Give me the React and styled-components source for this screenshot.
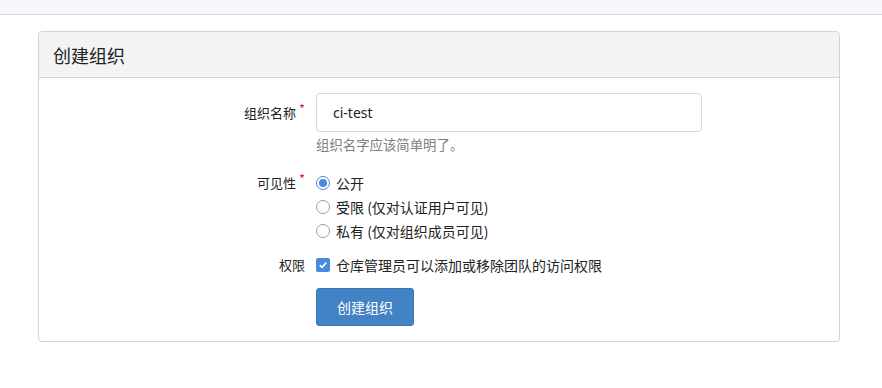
import React from "react";
import styled, { createGlobalStyle } from "styled-components";

const GlobalStyle = createGlobalStyle`
  html, body {
    margin: 0;
    padding: 0;
    background: #fff;
    font-family: "Noto Sans", "Noto Sans CJK SC", sans-serif;
    color: #222;
  }
`;

const TopStrip = styled.div`
  height: 14px;
  background: #f6f7fa;
  border-bottom: 1px solid #d7d9de;
`;

const Page = styled.div`
  padding: 16px 42px 0 38px;
`;

const Card = styled.div`
  border: 1px solid #d4d4d5;
  border-radius: 4px;
  background: #fff;
`;

const CardHeader = styled.div`
  height: 45px;
  display: flex;
  align-items: center;
  padding: 0 14px;
  background: #f2f3f5;
  border-bottom: 1px solid #d4d4d5;
  border-radius: 4px 4px 0 0;
  font-family: "Noto Sans CJK SC", sans-serif;
  font-size: 18px;
  color: #222;
`;

const Form = styled.form`
  padding: 15px 0 15px;
  display: flex;
  flex-direction: column;
`;

const Field = styled.div`
  display: grid;
  grid-template-columns: 266px 1fr;
  column-gap: 11px;
  align-items: ${(p) => (p.$top ? "start" : "center")};
  margin-bottom: ${(p) => p.$gap || 0}px;
`;

const Label = styled.label`
  justify-self: end;
  font-family: "Noto Sans CJK SC", sans-serif;
  font-size: 13px;
  color: #222;
  line-height: ${(p) => p.$lh || 20}px;
  padding-top: ${(p) => p.$pt || 0}px;

  ${(p) =>
    p.$required &&
    `
    &::after {
      content: "*";
      color: #db2828;
      margin-left: 3px;
      position: relative;
      top: -4px;
    }
  `}
`;

const Control = styled.div`
  display: flex;
  flex-direction: column;
`;

const Input = styled.input`
  width: 386px;
  height: 39px;
  box-sizing: border-box;
  border: 1px solid #d7d9de;
  border-radius: 4px;
  padding: 0 16px;
  font-family: "Noto Sans", "Noto Sans CJK SC", sans-serif;
  font-size: 14px;
  color: #222;
  outline: none;
`;

const Help = styled.div`
  margin-top: 3px;
  font-family: "Noto Sans CJK SC", sans-serif;
  font-size: 13.4px;
  color: #808080;
  line-height: 18px;
`;

const OptionRow = styled.label`
  display: flex;
  align-items: center;
  gap: 6px;
  height: 24px;
  font-family: "Noto Sans CJK SC", sans-serif;
  font-size: 14px;
  color: #222;
`;

const RadioMark = styled.span`
  width: 14px;
  height: 14px;
  box-sizing: border-box;
  border-radius: 50%;
  border: 1px solid ${(p) => (p.$on ? "#4a89dc" : "#a0a0a0")};
  display: flex;
  align-items: center;
  justify-content: center;
  background: #fff;

  &::after {
    content: "";
    display: ${(p) => (p.$on ? "block" : "none")};
    width: 8px;
    height: 8px;
    border-radius: 50%;
    background: #4a89dc;
  }
`;

const CheckMark = styled.span`
  width: 14px;
  height: 14px;
  border-radius: 2px;
  background: #4a89dc;
  display: flex;
  align-items: center;
  justify-content: center;
`;

const Button = styled.button`
  width: 98px;
  height: 38px;
  border: 1px solid #3b78b8;
  border-radius: 3px;
  background: #4183c4;
  color: #fff;
  font-family: "Noto Sans CJK SC", sans-serif;
  font-size: 14px;
  cursor: pointer;
`;

const Radio = ({ on, children }) => (
  <OptionRow>
    <RadioMark $on={on} />
    {children}
  </OptionRow>
);

export default function App() {
  return (
    <>
      <GlobalStyle />
      <TopStrip />
      <Page>
        <Card>
          <CardHeader>创建组织</CardHeader>
          <Form onSubmit={(e) => e.preventDefault()}>
            <Field $top $gap={18}>
              <Label $required $lh={20} $pt={10}>组织名称</Label>
              <Control>
                <Input defaultValue="ci-test" />
                <Help>组织名字应该简单明了。</Help>
              </Control>
            </Field>
            <Field $top $gap={10}>
              <Label $required $lh={24}>可见性</Label>
              <Control>
                <Radio on>公开</Radio>
                <Radio>受限 (仅对认证用户可见)</Radio>
                <Radio>私有 (仅对组织成员可见)</Radio>
              </Control>
            </Field>
            <Field $gap={11}>
              <Label $lh={24}>权限</Label>
              <Control>
                <OptionRow>
                  <CheckMark>
                    <svg width="10" height="10" viewBox="0 0 10 10">
                      <path d="M1.8 5.2 L4 7.3 L8.3 2.6" fill="none" stroke="#fff" strokeWidth="1.6" />
                    </svg>
                  </CheckMark>
                  仓库管理员可以添加或移除团队的访问权限
                </OptionRow>
              </Control>
            </Field>
            <Field>
              <span />
              <Control>
                <Button type="button">创建组织</Button>
              </Control>
            </Field>
          </Form>
        </Card>
      </Page>
    </>
  );
}
